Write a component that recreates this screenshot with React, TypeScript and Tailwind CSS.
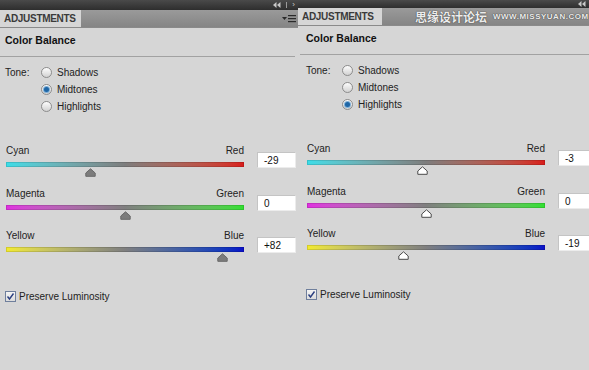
import React from "react";

type Slider = { left: string; right: string; value: number; grad: string };

const font = { fontFamily: '"Liberation Sans", Arial, sans-serif' };

function Radio({ on }: { on: boolean }) {
  return (
    <div className="w-[11px] h-[11px] rounded-full border border-[#8c8c8c] bg-linear-to-b from-[#fdfdfd] to-[#d2d2d2] flex items-center justify-center">
      {on && <div className="w-[5px] h-[5px] rounded-full bg-[#1f66a6] shadow-[0_0_0_1px_#7fb0d8]" />}
    </div>
  );
}

function Thumb({ white }: { white: boolean }) {
  return (
    <svg width="11" height="9" viewBox="0 0 11 9">
      <path
        d="M5.5 0.8 L10.2 5 L10.2 8.3 L0.8 8.3 L0.8 5 Z"
        fill={white ? "#ffffff" : "#7c7c7c"}
        stroke={white ? "#4a4a4a" : "#6a6a6a"}
        strokeWidth="1"
        strokeLinejoin="round"
      />
    </svg>
  );
}

function MenuIcon() {
  return (
    <svg width="14" height="9" viewBox="0 0 14 9">
      <path d="M0 3 L5 3 L2.5 6 Z" fill="#2a2a2a" />
      <rect x="6" y="1" width="8" height="1.2" fill="#2a2a2a" />
      <rect x="6" y="4" width="8" height="1.2" fill="#2a2a2a" />
      <rect x="6" y="7" width="8" height="1.2" fill="#2a2a2a" />
    </svg>
  );
}

function Collapse() {
  return (
    <svg width="8" height="6" viewBox="0 0 8 6">
      <path d="M3.5 0 L0 3 L3.5 6 Z" fill="#c8c8c8" />
      <path d="M7.5 0 L4 3 L7.5 6 Z" fill="#c8c8c8" />
    </svg>
  );
}

function Panel({
  width,
  topH,
  padL,
  white,
  tone,
  sliders,
  right,
}: {
  width: string;
  topH: string;
  padL: string;
  white: boolean;
  tone: number;
  sliders: Slider[];
  right: boolean;
}) {
  return (
    <div className={`${width} shrink-0 overflow-hidden bg-[#d6d6d6] h-[370px]`} style={font}>
      <div className={`${topH} bg-linear-to-b from-[#4a4a4a] to-[#2e2e2e] flex items-center justify-end gap-[5px] pr-[3px]`}>
        <Collapse />
        {!right && (
          <>
            <div className="w-px h-[6px] bg-[#9a9a9a]" />
            <span className="text-[8px] leading-[8px] text-[#c8c8c8]">›</span>
          </>
        )}
      </div>
      <div className="h-[18px] bg-linear-to-b from-[#9a9a9a] to-[#858585] flex items-stretch border-b border-[#8a8a8a] whitespace-nowrap">
        <div className={`${right ? "w-[84px]" : "w-[81px]"} shrink-0 bg-[#d6d6d6] flex items-center pl-[4px] text-[10px] font-bold tracking-[-0.3px] text-[#3a3a3a]`}>
          ADJUSTMENTS
        </div>
        {right ? (
          <div className="flex items-center ml-[33px] gap-[6px] shrink-0">
            <span
              className="text-[12px] leading-[14px] font-bold text-[#ececec]"
              style={{ fontFamily: '"Noto Sans CJK SC", sans-serif', textShadow: "0 0 1px #444, 0 0 1px #444" }}
            >
              思缘设计论坛
            </span>
            <span
              className="text-[8px] font-bold text-[#ececec] tracking-[0.5px]"
              style={{ textShadow: "0 0 1px #444, 0 0 1px #444" }}
            >
              WWW.MISSYUAN.COM
            </span>
            <span className="text-[8px] text-[#2a2a2a] ml-[2px]">▾</span>
          </div>
        ) : (
          <div className="ml-auto flex items-center pr-[2px]">
            <MenuIcon />
          </div>
        )}
      </div>

      <div className={`h-[28px] ${padL} pt-[6px] text-[10.5px] font-bold leading-[13px] text-[#111]`}>Color Balance</div>
      <div className={`h-px bg-[#a2a2a2] ${right ? "ml-[2px]" : "mr-[3px]"}`} />

      <div className={`${padL} pt-[7px] flex text-[10px] text-[#222]`}>
        <div className="w-[36px] h-[17px] flex items-center">Tone:</div>
        <div className="flex flex-col">
          {["Shadows", "Midtones", "Highlights"].map((t, i) => (
            <div key={t} className="h-[17px] flex items-center gap-[5px]">
              <Radio on={i === tone} />
              <span>{t}</span>
            </div>
          ))}
        </div>
      </div>

      <div className={`${padL} pt-[30px]`}>
        {sliders.map((s, i) => (
          <div key={s.left} className={`${i === 0 ? "h-[43px]" : "h-[42px]"} flex items-start`}>
            <div className="w-[238px] shrink-0 ml-[1px]">
              <div className="h-[12px] leading-[12px] flex justify-between text-[10px] text-[#222]">
                <span>{s.left}</span>
                <span>{s.right}</span>
              </div>
              <div className={`relative h-[5px] mt-[5px] ${s.grad} shadow-[inset_0_0_0_1px_rgba(0,0,0,0.12)]`}>
                <div className="absolute top-[6px]" style={{ left: `calc(${(s.value + 100) / 2}% - 5.5px)` }}>
                  <Thumb white={white} />
                </div>
              </div>
            </div>
            <div className="ml-[13px] mt-[7px] w-[39px] h-[16px] shrink-0 bg-white border border-[#c4c4c4] border-b-[#ececec] border-r-[#ececec] flex items-center pl-[6px] text-[10px] text-[#111]">
              {s.value > 0 ? `+${s.value}` : `${s.value}`}
            </div>
          </div>
        ))}

        <div className="mt-[17px] flex items-center gap-[3px] text-[10px] text-[#222]">
          <div className="w-[11px] h-[11px] border border-[#6f7f9c] bg-linear-to-b from-[#f4f4f4] to-[#dcdcdc] flex items-center justify-center">
            <svg width="9" height="9" viewBox="0 0 9 9">
              <path d="M1.5 4.5 L3.5 7 L7.5 1.5" fill="none" stroke="#2b3f80" strokeWidth="1.4" />
            </svg>
          </div>
          <span>Preserve Luminosity</span>
        </div>
      </div>
    </div>
  );
}

const cr = "bg-linear-to-r from-[#3adde8] via-[#7d7d7d] to-[#d81a1a]";
const mg = "bg-linear-to-r from-[#e02fe0] via-[#7f7f7f] to-[#2fe02f]";
const yb = "bg-linear-to-r from-[#f2ea2c] via-[#7f7f7f] to-[#0c0cc8]";

export default function App() {
  return (
    <div className="w-[589px] h-[370px] flex overflow-hidden bg-[#d6d6d6]">
      <Panel
        width="w-[298px]"
        topH="h-[10px]"
        padL="pl-[5px]"
        white={false}
        tone={1}
        right={false}
        sliders={[
          { left: "Cyan", right: "Red", value: -29, grad: cr },
          { left: "Magenta", right: "Green", value: 0, grad: mg },
          { left: "Yellow", right: "Blue", value: 82, grad: yb },
        ]}
      />
      <Panel
        width="w-[291px]"
        topH="h-[8px]"
        padL="pl-[8px]"
        white={true}
        tone={2}
        right={true}
        sliders={[
          { left: "Cyan", right: "Red", value: -3, grad: cr },
          { left: "Magenta", right: "Green", value: 0, grad: mg },
          { left: "Yellow", right: "Blue", value: -19, grad: yb },
        ]}
      />
    </div>
  );
}
